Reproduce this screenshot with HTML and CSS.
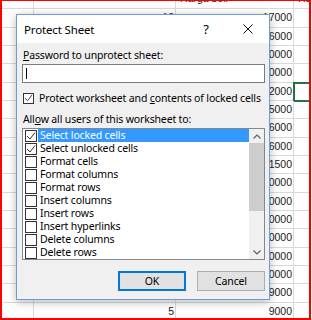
FILE: index.html
```html
<!DOCTYPE html>
<html lang="en">
<head>
    <meta charset="UTF-8">
    <title>Protect Sheet</title>
    <link rel="stylesheet" href="styles.css">
</head>
<body>
    <div class="frame">
        <div class="sheet">
            <div class="row top"><div class="c"></div><div class="c"></div><div class="c hd">Harga beli</div><div class="c hd">Ha</div></div>
            <div class="row"><div class="c"></div><div class="c num">10</div><div class="c num">17000</div><div class="c"></div></div>
            <div class="row"><div class="c"></div><div class="c"></div><div class="c num">16000</div><div class="c"></div></div>
            <div class="row"><div class="c"></div><div class="c"></div><div class="c num">10000</div><div class="c"></div></div>
            <div class="row"><div class="c"></div><div class="c"></div><div class="c num">10000</div><div class="c"></div></div>
            <div class="row"><div class="c"></div><div class="c"></div><div class="c num">12000</div><div class="c sel"></div></div>
            <div class="row"><div class="c"></div><div class="c"></div><div class="c num">15000</div><div class="c"></div></div>
            <div class="row"><div class="c"></div><div class="c"></div><div class="c num">16000</div><div class="c"></div></div>
            <div class="row"><div class="c"></div><div class="c"></div><div class="c num">16000</div><div class="c"></div></div>
            <div class="row"><div class="c"></div><div class="c"></div><div class="c num">11500</div><div class="c"></div></div>
            <div class="row"><div class="c"></div><div class="c"></div><div class="c num">10000</div><div class="c"></div></div>
            <div class="row"><div class="c"></div><div class="c"></div><div class="c num">10000</div><div class="c"></div></div>
            <div class="row"><div class="c"></div><div class="c"></div><div class="c num">10000</div><div class="c"></div></div>
            <div class="row"><div class="c"></div><div class="c"></div><div class="c num">10000</div><div class="c"></div></div>
            <div class="row"><div class="c"></div><div class="c"></div><div class="c num">10000</div><div class="c"></div></div>
            <div class="row"><div class="c"></div><div class="c"></div><div class="c num">10000</div><div class="c"></div></div>
            <div class="row"><div class="c"></div><div class="c"></div><div class="c num">9000</div><div class="c"></div></div>
            <div class="row"><div class="c"></div><div class="c num">5</div><div class="c num">9000</div><div class="c"></div></div>
        </div>

        <!-- dialog over the sheet -->
        <div class="dialog">
            <div class="titlebar">
                <span class="title">Protect Sheet</span>
                <span class="cap-btn">?</span>
                <span class="cap-btn">
                    <svg width="10" height="10" viewBox="0 0 10 10"><path d="M0.5 0.5 L9.5 9.5 M9.5 0.5 L0.5 9.5" stroke="#111" stroke-width="1" fill="none"/></svg>
                </span>
            </div>
            <div class="dlg-body">
                <div class="lbl"><u>P</u>assword to unprotect sheet:</div>
                <div class="pwd"><span class="caret"></span></div>
                <div class="chk-row">
                    <span class="box"><svg width="10" height="10" viewBox="0 0 10 10"><path d="M1 5 L4 8 L9 1.5" stroke="#333" stroke-width="1" fill="none"/></svg></span>
                    <span>Protect worksheet and <u>c</u>ontents of locked cells</span>
                </div>
                <div class="lbl lbl2">All<u>o</u>w all users of this worksheet to:</div>
                <div class="listbox">
                    <div class="items">
                        <div class="item"><span class="box"><svg width="10" height="10" viewBox="0 0 10 10"><path d="M1 5 L4 8 L9 1.5" stroke="#333" stroke-width="1" fill="none"/></svg></span><span class="txt active">Select locked cells</span></div>
                        <div class="item"><span class="box"><svg width="10" height="10" viewBox="0 0 10 10"><path d="M1 5 L4 8 L9 1.5" stroke="#333" stroke-width="1" fill="none"/></svg></span><span class="txt">Select unlocked cells</span></div>
                        <div class="item"><span class="box"></span><span class="txt">Format cells</span></div>
                        <div class="item"><span class="box"></span><span class="txt">Format columns</span></div>
                        <div class="item"><span class="box"></span><span class="txt">Format rows</span></div>
                        <div class="item"><span class="box"></span><span class="txt">Insert columns</span></div>
                        <div class="item"><span class="box"></span><span class="txt">Insert rows</span></div>
                        <div class="item"><span class="box"></span><span class="txt">Insert hyperlinks</span></div>
                        <div class="item"><span class="box"></span><span class="txt">Delete columns</span></div>
                        <div class="item"><span class="box"></span><span class="txt">Delete rows</span></div>
                    </div>
                    <div class="scrollbar">
                        <div class="arrow"><svg width="8" height="5" viewBox="0 0 8 5"><path d="M0.5 4.5 L4 1 L7.5 4.5" stroke="#606060" stroke-width="1.2" fill="none"/></svg></div>
                        <div class="thumb"></div>
                        <div class="track"></div>
                        <div class="arrow"><svg width="8" height="5" viewBox="0 0 8 5"><path d="M0.5 0.5 L4 4 L7.5 0.5" stroke="#606060" stroke-width="1.2" fill="none"/></svg></div>
                    </div>
                </div>
                <div class="buttons">
                    <div class="btn default">OK</div>
                    <div class="btn">Cancel</div>
                </div>
            </div>
        </div>
    </div>
</body>
</html>
```

FILE: styles.css
```css
body {
    margin: 0;
    background: #fff;
}
.frame {
    position: relative;
    width: 311px;
    height: 320px;
    box-sizing: border-box;
    border: 2px solid #ff0000;
    border-top-width: 1px;
    overflow: hidden;
    background: #fff;
}

/* spreadsheet behind */
.sheet {
    margin-top: -10px;
    font-family: "Liberation Sans", Arial, sans-serif;
    font-size: 10.5px;
    color: #1a1a1a;
}
.row {
    display: grid;
    grid-template-columns: 32px 142px 118px 30px;
    height: 18.33px;
}
.c {
    box-sizing: border-box;
    border-right: 1px solid #d9d9d9;
    border-bottom: 1px solid #d9d9d9;
    line-height: 17px;
    white-space: nowrap;
    overflow: hidden;
}
.num {
    text-align: right;
    padding-right: 1px;
}
.hd {
    padding-left: 4px;
    line-height: 14px;
}
.sel {
    outline: 2px solid #217346;
    outline-offset: -1px;
}

/* dialog */
.dialog {
    position: absolute;
    left: 14px;
    top: 13px;
    width: 254px;
    height: 286px;
    box-sizing: border-box;
    border: 1px solid #6f9ad6;
    background: #f0f0f0;
    box-shadow: 0 2px 9px rgba(0,0,0,0.28);
    font-family: "Noto Sans", "Open Sans", sans-serif;
    font-size: 10.5px;
    letter-spacing: -0.15px;
    color: #000;
}
.titlebar {
    display: flex;
    align-items: center;
    height: 28px;
    background: #fff;
    padding-left: 7px;
}
.title {
    flex: 1;
    font-size: 11.5px;
}
.cap-btn {
    width: 42px;
    text-align: center;
    font-size: 13px;
    display: flex;
    justify-content: center;
    align-items: center;
}
.dlg-body {
    padding: 0 4px 0 5px;
}
.lbl {
    margin-top: 5px;
    padding-left: 1px;
    line-height: 14px;
    white-space: nowrap;
}
.lbl2 {
    margin-top: 7px;
}
.pwd {
    margin-top: 2px;
    height: 19px;
    box-sizing: border-box;
    border: 1px solid #7a7a7a;
    background: #fff;
    padding: 3px 0 0 3px;
}
.caret {
    display: block;
    width: 1px;
    height: 11px;
    background: #000;
}
.chk-row {
    display: flex;
    align-items: center;
    margin-top: 8px;
    height: 14px;
    padding-left: 1px;
    white-space: nowrap;
}
.chk-row .box {
    margin-right: 5px;
}
.box {
    width: 11px;
    height: 11px;
    box-sizing: border-box;
    border: 1px solid #333;
    background: #fff;
    display: flex;
    align-items: center;
    justify-content: center;
    flex: none;
}
.listbox {
    margin-top: 2px;
    height: 132px;
    box-sizing: border-box;
    border: 1px solid #828790;
    background: #fff;
    display: flex;
}
.items {
    flex: 1;
}
.item {
    display: flex;
    align-items: center;
    height: 13px;
    padding-left: 2px;
}
.item .box {
    width: 12px;
    height: 12px;
    margin-right: 1px;
}
.txt {
    flex: 1;
    line-height: 13px;
    padding-left: 2px;
    white-space: nowrap;
}
.active {
    background: #3399ff;
    color: #fff;
}
.scrollbar {
    width: 15px;
    display: flex;
    flex-direction: column;
    background: #f0f0f0;
}
.arrow {
    height: 14px;
    display: flex;
    align-items: center;
    justify-content: center;
}
.thumb {
    height: 68px;
    background: #cdcdcd;
}
.track {
    flex: 1;
}
.buttons {
    display: flex;
    justify-content: flex-end;
    gap: 11px;
    margin-top: 11px;
}
.btn {
    width: 68px;
    height: 20px;
    box-sizing: border-box;
    border: 1px solid #adadad;
    background: #e1e1e1;
    text-align: center;
    line-height: 18px;
}
.default {
    border: 2px solid #0078d7;
    line-height: 16px;
}
```
